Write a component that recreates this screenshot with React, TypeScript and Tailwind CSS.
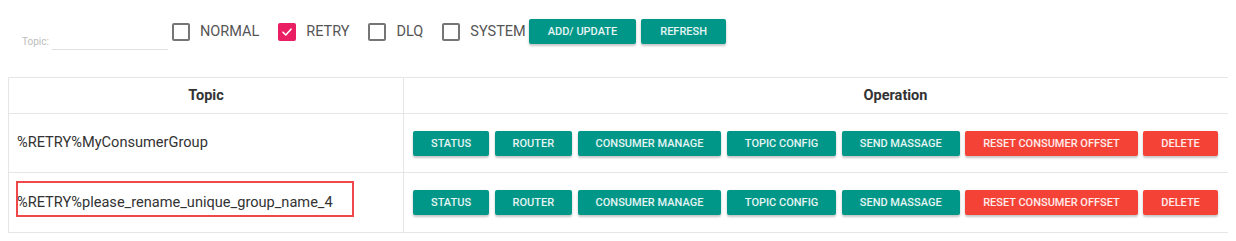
import React from "react";

const teal = "bg-[#009688]";
const red = "bg-[#f44336]";

function Btn({ label, color, wide }: { label: string; color: "teal" | "red"; wide?: boolean }) {
  return (
    <button
      className={`${color === "teal" ? teal : red} ${wide ? "px-[19px]" : "px-[18px]"} h-[25px] rounded-[2px] text-[11px] font-medium uppercase text-white/90 leading-none shadow-[0_2px_2px_rgba(0,0,0,0.18),0_1px_4px_rgba(0,0,0,0.08)] whitespace-nowrap`}
    >
      {label}
    </button>
  );
}

function Check({ label, checked }: { label: string; checked?: boolean }) {
  return (
    <div className="flex items-center h-[18px] mt-[4px]">
      {checked ? (
        <div className="w-[18px] h-[18px] rounded-[2px] bg-[#e91e63] flex items-center justify-center">
          <svg width="12" height="12" viewBox="0 0 12 12" fill="none">
            <path d="M2 6.2 L4.8 9 L10 3.2" stroke="white" strokeWidth="1.6" strokeLinecap="round" strokeLinejoin="round" />
          </svg>
        </div>
      ) : (
        <div className="w-[18px] h-[18px] rounded-[2px] border-2 border-[#757575]" />
      )}
      <span className="ml-[10px] text-[14.5px] text-[#555] leading-none">{label}</span>
    </div>
  );
}

const ops: { label: string; color: "teal" | "red" }[] = [
  { label: "STATUS", color: "teal" },
  { label: "ROUTER", color: "teal" },
  { label: "CONSUMER MANAGE", color: "teal" },
  { label: "TOPIC CONFIG", color: "teal" },
  { label: "SEND MASSAGE", color: "teal" },
  { label: "RESET CONSUMER OFFSET", color: "red" },
  { label: "DELETE", color: "red" },
];

function Ops() {
  return (
    <div className="flex items-center gap-[5.5px] pl-[9px]">
      {ops.map((o) => (
        <Btn key={o.label} label={o.label} color={o.color} />
      ))}
    </div>
  );
}

export default function App() {
  return (
    <div
      className="w-[1236px] h-[241px] bg-white overflow-hidden"
      style={{ fontFamily: "Roboto, 'Liberation Sans', sans-serif" }}
    >
      <div className="flex items-start pt-[19px]">
        <div className="flex items-end ml-[22px] mt-[12px] h-[19px]">
          <span className="text-[10px] leading-none text-[#bdbdbd] mb-[3px]">Topic:</span>
          <div className="w-[116px] h-full border-b border-[#e0e0e0] ml-[3px]" />
        </div>
        <div className="ml-[4px] flex items-start gap-[19px]">
          <Check label="NORMAL" />
          <Check label="RETRY" checked />
          <Check label="DLQ" />
          <Check label="SYSTEM" />
        </div>
        <div className="ml-[3px] flex gap-[5px]">
          <Btn label="ADD/ UPDATE" color="teal" wide />
          <Btn label="REFRESH" color="teal" wide />
        </div>
      </div>

      <div className="ml-[8px] mt-[27px] w-[1220px] overflow-hidden">
        <div className="w-[1380px] border border-[#e6e6e6] text-[#333]">
          <div className="flex h-[36px] border-b border-[#e6e6e6] font-bold text-[14.5px]">
            <div className="w-[395px] border-r border-[#e6e6e6] flex items-center justify-center">Topic</div>
            <div className="flex-1 flex items-center justify-center">Operation</div>
          </div>
          <div className="flex h-[59px] border-b border-[#e6e6e6] text-[14.6px]">
            <div className="w-[395px] border-r border-[#e6e6e6] flex items-center pl-[8px]">%RETRY%MyConsumerGroup</div>
            <div className="flex-1 flex items-center">
              <Ops />
            </div>
          </div>
          <div className="flex h-[59px] text-[14.6px]">
            <div className="relative w-[395px] border-r border-[#e6e6e6] flex items-center pl-[8px]">
              %RETRY%please_rename_unique_group_name_4
              <div className="absolute left-[7px] top-[8px] w-[338px] h-[36px] border-2 border-[#f04848]" />
            </div>
            <div className="flex-1 flex items-center">
              <Ops />
            </div>
          </div>
        </div>
      </div>
    </div>
  );
}
